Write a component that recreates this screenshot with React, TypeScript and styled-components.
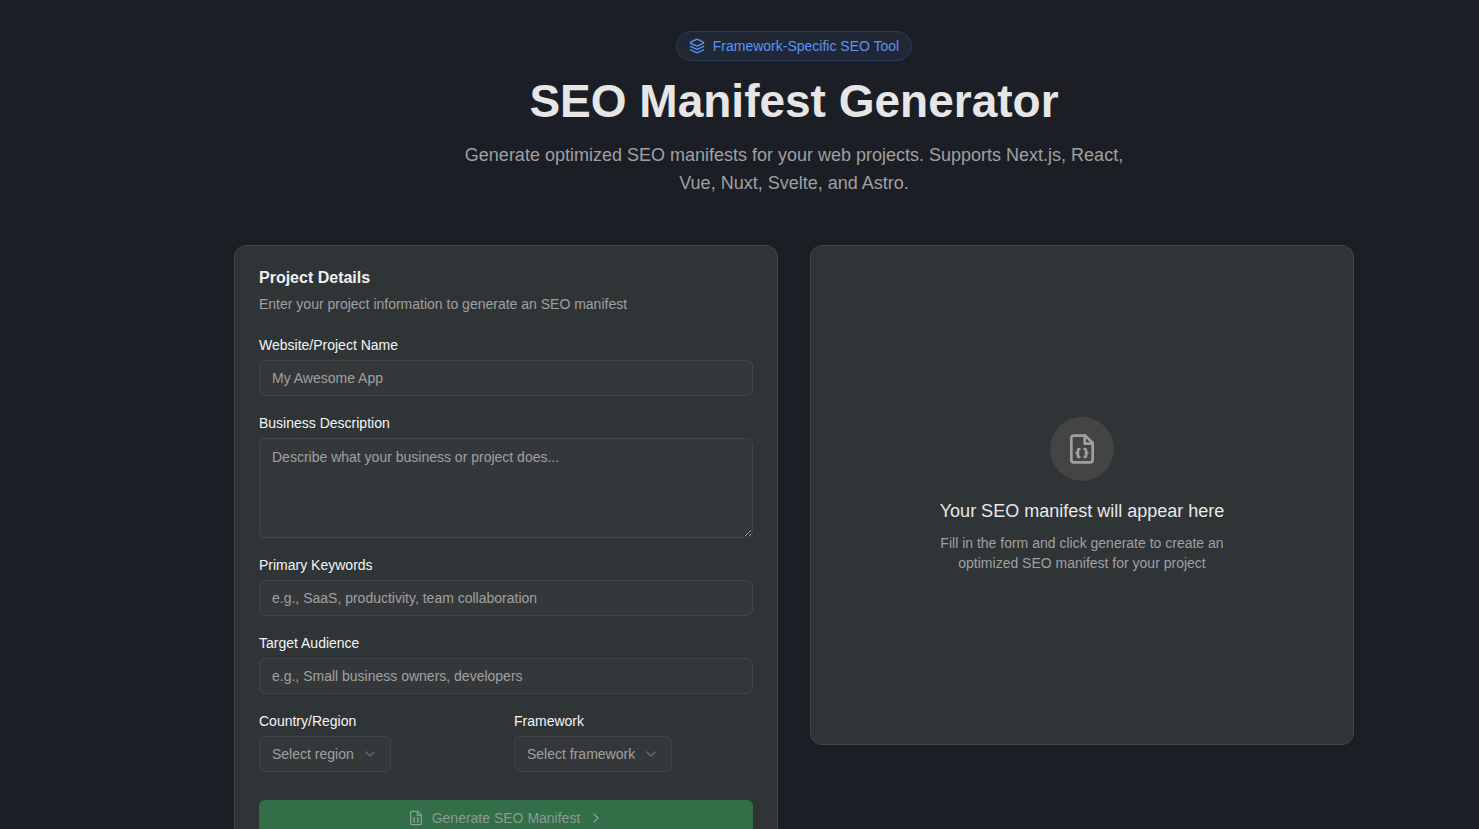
import React from 'react';
import styled, { createGlobalStyle } from 'styled-components';
import { ChevronDown, ChevronRight } from 'lucide-react';

const GlobalStyle = createGlobalStyle`
  *, *::before, *::after { box-sizing: border-box; }
  body {
    margin: 0;
    background: #1b1e25;
    color: #e8e8e8;
    font-family: "Liberation Sans", Arial, sans-serif;
    font-size: 14px;
    line-height: 20px;
  }
  h1, h2, h3, p { margin: 0; }
  button, input, textarea, select { font: inherit; }
`;

const Page = styled.main`
  min-height: 100vh;
  padding: 31px 0 48px 109px;
`;

const Container = styled.div`
  max-width: 1120px;
  margin: 0 auto;
  display: flex;
  flex-direction: column;
  gap: 48px;
`;

const Hero = styled.header`
  display: flex;
  flex-direction: column;
  align-items: center;
  gap: 16px;
  text-align: center;
`;

const Badge = styled.div`
  display: flex;
  align-items: center;
  gap: 8px;
  padding: 4px 12px;
  border: 1px solid #2a3c5c;
  border-radius: 16px;
  background: #212835;
  color: #5c93f5;
`;

const Title = styled.h1`
  font-size: 46px;
  line-height: 48px;
  font-weight: 700;
  color: #e6e6e6;
`;

const Subtitle = styled.p`
  max-width: 672px;
  font-size: 18px;
  line-height: 28px;
  color: #a0a0a0;
`;

const Columns = styled.div`
  display: grid;
  grid-template-columns: repeat(auto-fit, minmax(320px, 1fr));
  align-items: start;
  gap: 32px;
`;

const Card = styled.section`
  padding: 24px;
  border: 1px solid #444444;
  border-radius: 12px;
  background: #2f3436;
`;

const CardHeader = styled.div`
  display: flex;
  flex-direction: column;
  gap: 8px;
  margin-bottom: 24px;
`;

const CardTitle = styled.h2`
  font-size: 16px;
  line-height: 16px;
  font-weight: 700;
  color: #f0f0f0;
`;

const Muted = styled.p`
  color: #a0a0a0;
`;

const Form = styled.form`
  display: flex;
  flex-direction: column;
  gap: 20px;
`;

const Field = styled.div`
  display: flex;
  flex-direction: column;
  align-items: flex-start;
  gap: 8px;
`;

const FieldRow = styled.div`
  display: grid;
  grid-template-columns: 1fr 1fr;
  gap: 16px;
`;

const Label = styled.label`
  line-height: 14px;
  color: #f5f5f5;
`;

const Input = styled.input`
  width: 100%;
  height: 36px;
  padding: 0 12px;
  border: 1px solid #444444;
  border-radius: 6px;
  background: #35383a;
  color: #e8e8e8;
  &::placeholder { color: #a0a0a0; }
`;

const TextArea = styled.textarea`
  display: block;
  width: 100%;
  height: 100px;
  padding: 8px 12px;
  border: 1px solid #444444;
  border-radius: 6px;
  background: #35383a;
  color: #e8e8e8;
  resize: vertical;
  &::placeholder { color: #a0a0a0; }
`;

const SelectBox = styled.div`
  position: relative;
  color: #a0a0a0;
  svg {
    position: absolute;
    top: 10px;
    right: 13px;
    opacity: 0.5;
    pointer-events: none;
  }
`;

const Select = styled.select`
  appearance: none;
  field-sizing: content;
  display: block;
  height: 36px;
  padding: 0 36px 0 12px;
  border: 1px solid #444444;
  border-radius: 6px;
  background: #35383a;
  color: #a0a0a0;
`;

const SubmitButton = styled.button`
  display: flex;
  align-items: center;
  justify-content: center;
  gap: 8px;
  width: 100%;
  height: 36px;
  margin-top: 8px;
  border: 0;
  border-radius: 6px;
  background: #326e48;
  color: #8d9b91;
`;

const Preview = styled(Card)`
  display: flex;
  flex-direction: column;
  align-items: center;
  justify-content: center;
  min-height: 500px;
  text-align: center;
`;

const IconCircle = styled.div`
  display: flex;
  align-items: center;
  justify-content: center;
  width: 64px;
  height: 64px;
  margin-bottom: 16px;
  border-radius: 50%;
  background: #444444;
  color: #a0a0a0;
`;

const PreviewTitle = styled.h3`
  margin-bottom: 8px;
  font-size: 18px;
  line-height: 28px;
  font-weight: 400;
  color: #e8e8e8;
`;

const PreviewText = styled(Muted)`
  max-width: 320px;
`;

const StrokeIcon = styled.svg.attrs({ viewBox: '0 0 24 24', 'aria-hidden': true })`
  fill: none;
  stroke: currentColor;
  stroke-width: 2;
  stroke-linecap: round;
  stroke-linejoin: round;
`;

function LayersIcon({ size }: { size: number }) {
  return (
    <StrokeIcon width={size} height={size}>
      <path d="m12.83 2.18a2 2 0 0 0-1.66 0L2.6 6.08a1 1 0 0 0 0 1.83l8.58 3.91a2 2 0 0 0 1.66 0l8.58-3.9a1 1 0 0 0 0-1.83Z" />
      <path d="m22 17.65-9.17 4.16a2 2 0 0 1-1.66 0L2 17.65" />
      <path d="m22 12.65-9.17 4.16a2 2 0 0 1-1.66 0L2 12.65" />
    </StrokeIcon>
  );
}

function FileBracesIcon({ size }: { size: number }) {
  return (
    <StrokeIcon width={size} height={size}>
      <path d="M14.5 2H6a2 2 0 0 0-2 2v16a2 2 0 0 0 2 2h12a2 2 0 0 0 2-2V7.5L14.5 2z" />
      <path d="M14 2v6h6" />
      <path d="M10 12a1 1 0 0 0-1 1v1a1 1 0 0 1-1 1 1 1 0 0 1 1 1v1a1 1 0 0 0 1 1" />
      <path d="M14 18a1 1 0 0 0 1-1v-1a1 1 0 0 1 1-1 1 1 0 0 1-1-1v-1a1 1 0 0 0-1-1" />
    </StrokeIcon>
  );
}

type SelectFieldProps = { id: string; label: string; placeholder: string; options: string[] };

function SelectField({ id, label, placeholder, options }: SelectFieldProps) {
  return (
    <Field>
      <Label htmlFor={id}>{label}</Label>
      <SelectBox>
        <Select id={id} defaultValue="">
          <option value="">{placeholder}</option>
          {options.map((option) => (
            <option key={option}>{option}</option>
          ))}
        </Select>
        <ChevronDown size={16} />
      </SelectBox>
    </Field>
  );
}

export default function App() {
  return (
    <>
      <GlobalStyle />
      <Page>
        <Container>
          <Hero>
            <Badge>
              <LayersIcon size={16} />
              Framework-Specific SEO Tool
            </Badge>
            <Title>SEO Manifest Generator</Title>
            <Subtitle>
              Generate optimized SEO manifests for your web projects. Supports Next.js, React, Vue,
              Nuxt, Svelte, and Astro.
            </Subtitle>
          </Hero>
          <Columns>
            <Card>
              <CardHeader>
                <CardTitle>Project Details</CardTitle>
                <Muted>Enter your project information to generate an SEO manifest</Muted>
              </CardHeader>
              <Form>
                <Field>
                  <Label htmlFor="name">Website/Project Name</Label>
                  <Input id="name" placeholder="My Awesome App" />
                </Field>
                <Field>
                  <Label htmlFor="description">Business Description</Label>
                  <TextArea id="description" placeholder="Describe what your business or project does..." />
                </Field>
                <Field>
                  <Label htmlFor="keywords">Primary Keywords</Label>
                  <Input id="keywords" placeholder="e.g., SaaS, productivity, team collaboration" />
                </Field>
                <Field>
                  <Label htmlFor="audience">Target Audience</Label>
                  <Input id="audience" placeholder="e.g., Small business owners, developers" />
                </Field>
                <FieldRow>
                  <SelectField
                    id="region"
                    label="Country/Region"
                    placeholder="Select region"
                    options={['Global', 'Europe', 'Asia']}
                  />
                  <SelectField
                    id="framework"
                    label="Framework"
                    placeholder="Select framework"
                    options={['Next.js', 'React', 'Vue', 'Nuxt', 'Svelte', 'Astro']}
                  />
                </FieldRow>
                <SubmitButton type="submit" disabled>
                  <FileBracesIcon size={16} />
                  Generate SEO Manifest
                  <ChevronRight size={16} />
                </SubmitButton>
              </Form>
            </Card>
            <Preview>
              <IconCircle>
                <FileBracesIcon size={32} />
              </IconCircle>
              <PreviewTitle>Your SEO manifest will appear here</PreviewTitle>
              <PreviewText>
                Fill in the form and click generate to create an optimized SEO manifest for your
                project
              </PreviewText>
            </Preview>
          </Columns>
        </Container>
      </Page>
    </>
  );
}
